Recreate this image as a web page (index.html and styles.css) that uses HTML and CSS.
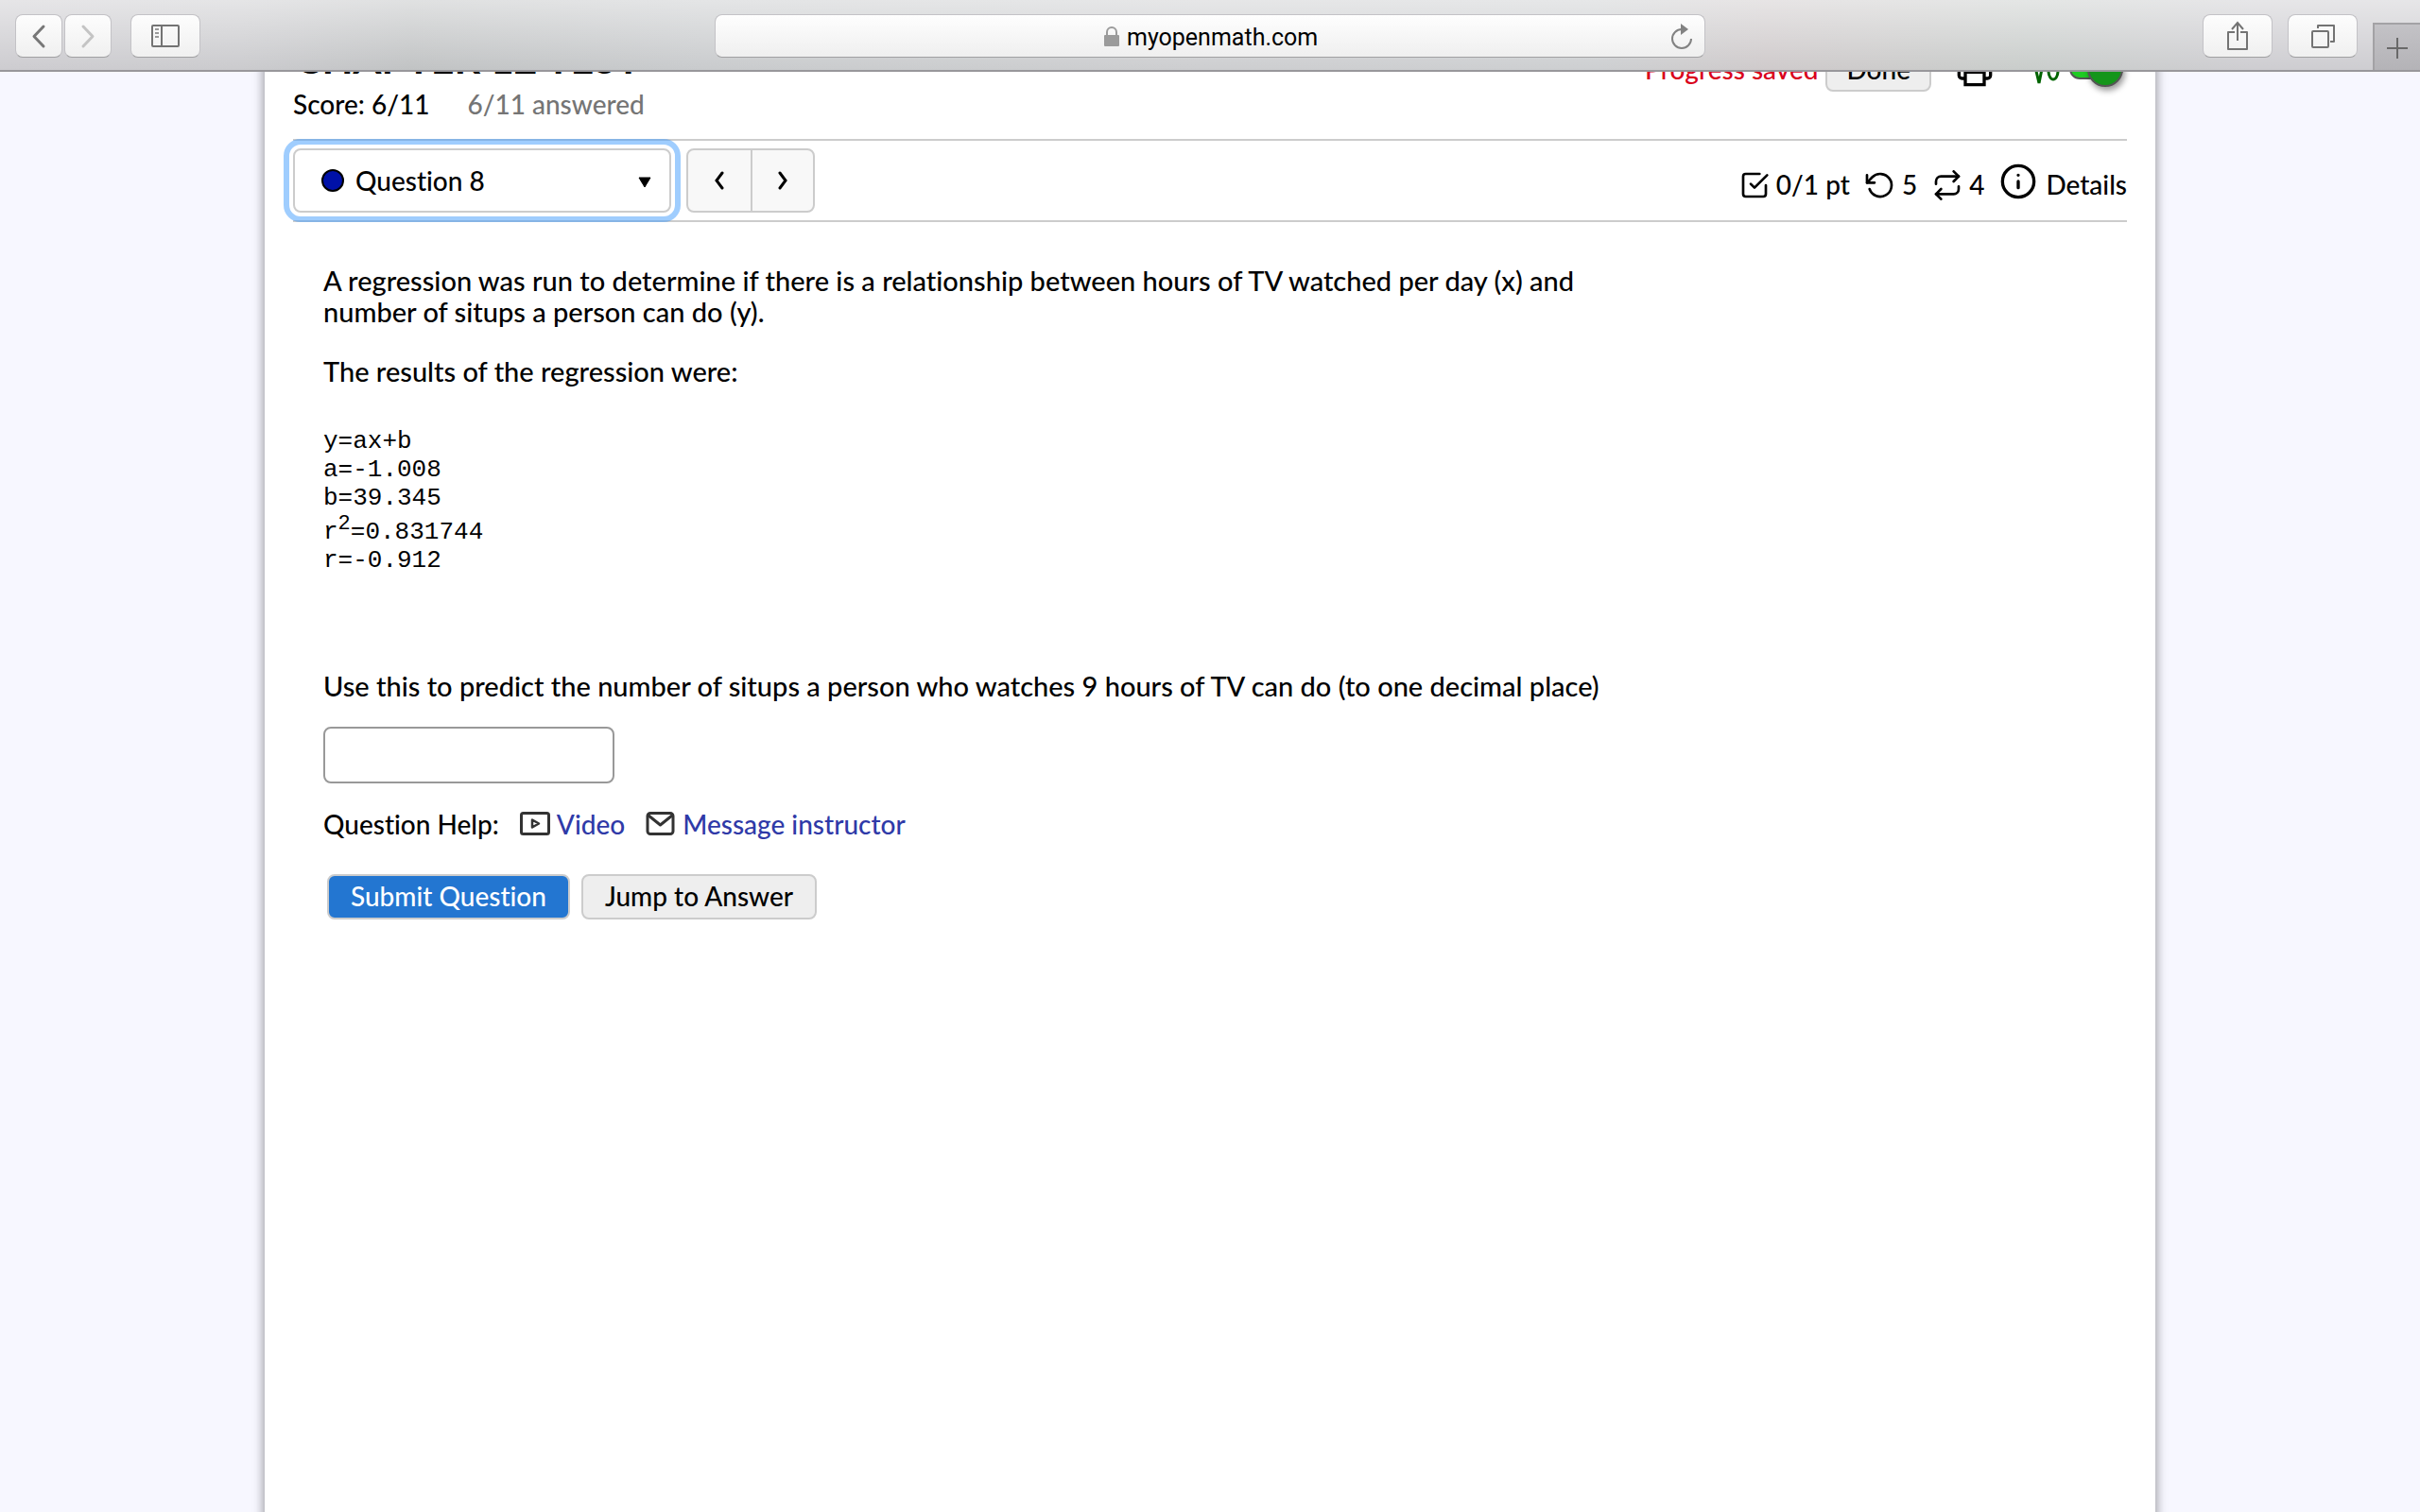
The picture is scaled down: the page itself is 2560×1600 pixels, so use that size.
FILE: index.html
```html
<!DOCTYPE html>
<html lang="en">
<head>
  <meta charset="UTF-8">
  <title>Chapter 12 Test</title>
  <link rel="stylesheet" href="styles.css">
</head>
<body>

  <!-- Browser toolbar -->
  <div class="toolbar">
    <div class="tools-left">
      <button class="tool tool-nav" aria-label="Back">
        <svg width="50" height="44" viewBox="0 0 50 44"><path d="M30 12L20 22.500L30 33" fill="none" stroke="#777" stroke-width="3" stroke-linecap="round" stroke-linejoin="round"/></svg>
      </button>
      <button class="tool tool-nav" aria-label="Forward" disabled>
        <svg width="50" height="44" viewBox="0 0 50 44"><path d="M20 12L30 22.500L20 33" fill="none" stroke="#c4c4c4" stroke-width="3" stroke-linecap="round" stroke-linejoin="round"/></svg>
      </button>
      <button class="tool tool-sidebar" aria-label="Show sidebar">
        <svg width="30" height="24" viewBox="0 0 30 24"><rect x="1" y="1" width="28" height="22" rx="1" fill="none" stroke="#737373" stroke-width="2"/><path d="M11 1v22" stroke="#737373" stroke-width="2"/><path d="M4 5h4M4 9h4M4 13h4" stroke="#9a9a9a" stroke-width="2"/></svg>
      </button>
    </div>

    <form class="address">
      <svg class="lock" width="18" height="22" viewBox="0 0 18 22"><rect x="1" y="9" width="16" height="12" rx="1" fill="#9b9b9b"/><path d="M4 10V6a5 5 0 0 1 10 0v4" fill="none" stroke="#9b9b9b" stroke-width="2"/></svg>
      <input class="address-input" type="text" value="myopenmath.com" aria-label="Address">
      <button class="reload" type="button" aria-label="Reload">
        <svg width="24" height="30" viewBox="0 0 24 30"><path d="M22 17a10 10 0 1 1-10-10" fill="none" stroke="#828282" stroke-width="2"/><path d="M11 1l8 6-8 6z" fill="#828282"/></svg>
      </button>
    </form>

    <div class="tools-right">
      <button class="tool" aria-label="Share">
        <svg width="24" height="32" viewBox="0 0 24 32"><path d="M9 12H2v18h20V12h-7" fill="none" stroke="#737373" stroke-width="2" stroke-linejoin="round"/><path d="M12 21V2M6 9l6-7 6 7" fill="none" stroke="#737373" stroke-width="2"/></svg>
      </button>
      <button class="tool" aria-label="Show all tabs">
        <svg width="26" height="26" viewBox="0 0 26 26"><rect x="2" y="8" width="17" height="17" rx="1" fill="none" stroke="#737373" stroke-width="2"/><path d="M8 5V2h17v17h-4" fill="none" stroke="#737373" stroke-width="2" stroke-linejoin="round"/></svg>
      </button>
      <button class="new-tab" aria-label="New tab">
        <svg width="22" height="22" viewBox="0 0 22 22"><path d="M11 0v22M0 11h22" stroke="#696969" stroke-width="2"/></svg>
      </button>
    </div>
  </div>

  <!-- Assessment page, scrolled a little -->
  <div class="viewport">
    <main class="page">
      <header class="header">
        <div>
          <h1 class="title">CHAPTER 12 TEST</h1>
          <div class="score">
            <span>Score: 6/11</span>
            <span class="answered">6/11 answered</span>
          </div>
        </div>
        <div class="actions">
          <span class="saved">Progress saved</span>
          <button class="btn btn-done">Done</button>
          <button class="icon-btn" aria-label="Print">
            <svg width="40" height="40" viewBox="0 0 24 24" fill="none" stroke="#000" stroke-width="2"><path d="M6 9V2h12v7M6 18H4a2 2 0 0 1-2-2v-5a2 2 0 0 1 2-2h16a2 2 0 0 1 2 2v5a2 2 0 0 1-2 2h-2"/><path d="M6 14h12v8H6z"/></svg>
          </button>
          <label class="math-toggle">
            <svg width="28" height="40" viewBox="0 0 28 40" fill="none" stroke="#006400" stroke-width="3"><path d="M0 20l2-2 4 17L12 5h16"/><ellipse cx="21" cy="22" rx="5" ry="9"/></svg>
            <input class="toggle" type="checkbox" aria-label="Equation editor" checked>
          </label>
        </div>
      </header>

      <div class="question-bar">
        <label class="picker">
          <svg width="24" height="24" viewBox="0 0 24 24"><circle cx="12" cy="12" r="11" fill="#0011a8" stroke="#000" stroke-width="2"/></svg>
          <select class="picker-select" aria-label="Question">
            <option>Question 8</option>
          </select>
          <svg class="picker-arrow" width="14" height="12" viewBox="0 0 14 12"><path d="M1 1h12L7 11z" stroke="#000" stroke-linejoin="round"/></svg>
        </label>
        <div class="steps">
          <button class="step" aria-label="Previous question">
            <svg width="12" height="20" viewBox="0 0 12 20"><path d="M9 2L3 10l6 8" fill="none" stroke="#000" stroke-width="3" stroke-linecap="round"/></svg>
          </button>
          <button class="step" aria-label="Next question">
            <svg width="12" height="20" viewBox="0 0 12 20"><path d="M3 2l6 8-6 8" fill="none" stroke="#000" stroke-width="3" stroke-linecap="round"/></svg>
          </button>
        </div>
        <div class="info">
          <span class="info-item">
            <svg class="line-icon" width="32" height="32" viewBox="0 0 24 24"><path d="M9 11l3 3L22 4"/><path d="M21 12v7a2 2 0 0 1-2 2H5a2 2 0 0 1-2-2V5a2 2 0 0 1 2-2h11"/></svg>
            0/1 pt
          </span>
          <span class="info-item">
            <svg class="line-icon" width="32" height="32" viewBox="0 0 24 24"><path d="M1.500 4v6h6"/><path d="M3.510 15a9 9 0 1 0 2.130-9.360L1.500 10"/></svg>
            5
          </span>
          <span class="info-item">
            <svg class="line-icon" width="32" height="32" viewBox="0 0 24 24"><path d="M17 1l4 4-4 4"/><path d="M3 11V9a4 4 0 0 1 4-4h14M7 23l-4-4 4-4"/><path d="M21 13v2a4 4 0 0 1-4 4H3"/></svg>
            4
          </span>
          <button class="info-item details">
            <svg class="line-icon" width="40" height="40" viewBox="0 0 24 24"><circle cx="12" cy="12" r="10"/><path d="M12 16v-4M12 8v0"/></svg>
            Details
          </button>
        </div>
      </div>

      <section class="question">
        <p class="prompt">A regression was run to determine if there is a relationship between hours of TV watched per day (x) and<br>
          number of situps a person can do (y).</p>
        <p class="prompt">The results of the regression were:</p>
<pre class="results">y=ax+b
a=-1.008
b=39.345
r<sup>2</sup>=0.831744
r=-0.912</pre>
        <label class="prompt" for="answer">Use this to predict the number of situps a person who watches 9 hours of TV can do (to one decimal place)</label>
        <input class="answer" id="answer" type="text">
        <div class="help">
          <span>Question Help:</span>
          <a class="help-link" href="#video">
            <svg width="32" height="28" viewBox="0 0 32 28" fill="none" stroke="#333" stroke-width="3" stroke-linejoin="round"><rect x="1.500" y="2.500" width="29" height="22" rx="2"/><path d="M13 9.500v8l7-4z" stroke-width="2.500"/></svg>
            Video
          </a>
          <a class="help-link" href="#message">
            <svg width="32" height="28" viewBox="0 0 32 28" fill="none" stroke="#333" stroke-width="3" stroke-linejoin="round"><rect x="2" y="2.500" width="27" height="22" rx="3"/><path d="M2.500 4.500L15.500 15l13-10.500"/></svg>
            Message instructor
          </a>
        </div>
        <div class="buttons">
          <button class="btn btn-primary">Submit Question</button>
          <button class="btn">Jump to Answer</button>
        </div>
      </section>
    </main>
  </div>

</body>
</html>
```
FILE: styles.css
```css
* {
  box-sizing: border-box;
}

body {
  margin: 0;
  height: 100vh;
  display: flex;
  flex-direction: column;
  background: #f7f7ff;
  color: #000;
  font-family: "Trebuchet MS", Lato, sans-serif;
  font-size: 28px;
  font-weight: 500;
  font-variant-ligatures: none;
  line-height: 33px;
  overflow: hidden;
}

button,
input,
select {
  font: inherit;
  color: inherit;
}

button {
  padding: 0;
  border: none;
  background: none;
}

svg {
  display: block;
  flex: none;
}

p,
h1,
pre {
  margin: 0;
}

/* Browser toolbar */
.toolbar {
  display: grid;
  grid-template-columns: 1fr minmax(0, 1048px) 1fr;
  height: 76px;
  flex: none;
  border-bottom: 2px solid #98979b;
  background:
    linear-gradient(rgba(255, 255, 255, 0.5), rgba(255, 255, 255, 0)),
    linear-gradient(90deg, #cdccd0 0, #cbcbce 10%, #c1c3c4 17%, #c9cbcd 29%, #cdced0 50%, #cdcfd1 66%, #cfcacb 73%, #c9cdcb 84%, #cecdd1 93%);
}

.tools-left,
.tools-right {
  display: flex;
  padding-top: 15px;
}

.tools-left {
  padding-left: 16px;
  gap: 2px;
}

.tools-right {
  justify-content: flex-end;
  gap: 16px;
}

.tool {
  display: flex;
  align-items: center;
  justify-content: center;
  width: 74px;
  height: 46px;
  border: 1px solid #c3c2c6;
  border-bottom-color: #a0a0a2;
  border-radius: 8px;
  background: linear-gradient(#fdfdfd, #f0f0f0);
}

.tool-nav {
  width: 50px;
}

.tool-sidebar {
  margin-left: 18px;
}

.address {
  display: grid;
  grid-template-columns: 1fr auto 1fr;
  align-items: center;
  height: 46px;
  margin-top: 15px;
  padding: 2px 12px 0 42px;
  border: 1px solid #c3c2c6;
  border-bottom-color: #a0a0a2;
  border-radius: 8px;
  background: linear-gradient(#fefefe, #efefef);
}

.lock {
  justify-self: end;
  margin-right: 7px;
}

.address-input {
  width: 206px;
  padding: 0;
  border: none;
  outline: none;
  background: none;
  font-family: Roboto, sans-serif;
  font-size: 25px;
  font-weight: 400;
}

.reload {
  justify-self: end;
}

.new-tab {
  display: flex;
  align-items: center;
  justify-content: center;
  width: 50px;
  height: 50px;
  margin-top: 9px;
  padding-top: 2px;
  border-top: 2px solid #a3a2a5;
  border-left: 2px solid #a3a2a5;
  background: linear-gradient(#c3c2c6, #b4b3b7);
}

/* Page */
.viewport {
  flex: 1;
  overflow: hidden;
}

.page {
  max-width: 2000px;
  min-height: 100vh;
  margin: -38px auto 0;
  padding: 0 30px;
  background: #fff;
  box-shadow: 0 0 10px 2px rgba(0, 0, 0, 0.35);
}

.header {
  display: flex;
  justify-content: space-between;
  padding-bottom: 20px;
}

.title {
  margin-bottom: 8px;
  padding-left: 2px;
  font-size: 43px;
  line-height: 48px;
}

.score {
  display: flex;
  gap: 40px;
}

.answered {
  color: #757575;
}

.actions {
  display: flex;
  align-items: center;
  height: 46px;
  margin-top: 12px;
}

.saved {
  margin-right: 8px;
  color: #d9001b;
}

.btn {
  height: 48px;
  padding: 0 23px;
  border: 2px solid #ccc;
  border-radius: 8px;
  background: #eee;
}

.btn-done {
  padding: 0 20px;
}

.btn-primary {
  background: #2376d1;
  color: #fff;
}

.icon-btn {
  margin: 0 42px 0 26px;
}

.math-toggle {
  display: flex;
  align-items: center;
  gap: 10px;
  margin-right: 4px;
}

.toggle {
  display: flex;
  align-items: center;
  justify-content: flex-end;
  appearance: none;
  width: 57px;
  height: 22px;
  margin: 0;
  border: 2px solid #555;
  border-radius: 11px;
  background: #1fcb23;
}

.toggle::before {
  content: "";
  flex: none;
  width: 34px;
  height: 34px;
  margin-right: -2px;
  border: 2px solid #555;
  border-radius: 50%;
  background: #14951a;
  box-shadow: 2px 4px 6px rgba(0, 0, 0, 0.4);
}

/* Question bar */
.question-bar {
  display: flex;
  align-items: center;
  height: 88px;
  border-top: 2px solid #ccc;
  border-bottom: 2px solid #ccc;
}

.picker {
  display: flex;
  align-items: center;
  gap: 12px;
  width: 400px;
  height: 68px;
  padding: 0 19px 0 28px;
  border: 2px solid #ccc;
  border-radius: 8px;
  outline: 6px solid rgba(63, 155, 253, 0.5);
  outline-offset: 4px;
}

.picker-select {
  flex: 1;
  min-width: 0;
  padding: 0;
  border: none;
  outline: none;
  appearance: none;
  background: none;
}

.picker-arrow {
  margin-top: 4px;
}

.steps {
  display: flex;
  margin-left: 16px;
  border: 2px solid #ccc;
  border-radius: 8px;
  background: #f8f8f8;
}

.step {
  display: flex;
  align-items: center;
  justify-content: center;
  width: 66px;
  height: 64px;
}

.step + .step {
  border-left: 2px solid #ccc;
}

.info {
  display: flex;
  align-items: flex-end;
  gap: 16px;
  margin-left: auto;
  padding-top: 2px;
}

.info-item {
  display: flex;
  align-items: flex-end;
  gap: 7px;
}

.details {
  gap: 9px;
}

.line-icon {
  fill: none;
  stroke: #000;
  stroke-width: 2;
  stroke-linecap: round;
  stroke-linejoin: round;
}

/* Question */
.question {
  padding: 45px 32px;
}

.prompt {
  display: block;
  margin-bottom: 30px;
  font-size: 29px;
}

.results {
  margin: 43px 0 101px;
  font-family: "Liberation Mono", monospace;
  font-size: 26px;
  font-weight: 400;
  line-height: 30px;
}

.results sup {
  font-size: 22px;
  line-height: 26px;
}

.answer {
  display: block;
  width: 308px;
  height: 60px;
  margin-top: -3px;
  padding: 0 12px;
  border: 2px solid #999;
  border-radius: 8px;
  background: #fff;
}

.help {
  display: flex;
  gap: 22px;
  margin-top: 27px;
}

.help-link {
  display: flex;
  align-items: center;
  gap: 7px;
  color: #2f3aa8;
  text-decoration: none;
}

.buttons {
  display: flex;
  gap: 12px;
  margin: 36px 4px 0;
}
```
